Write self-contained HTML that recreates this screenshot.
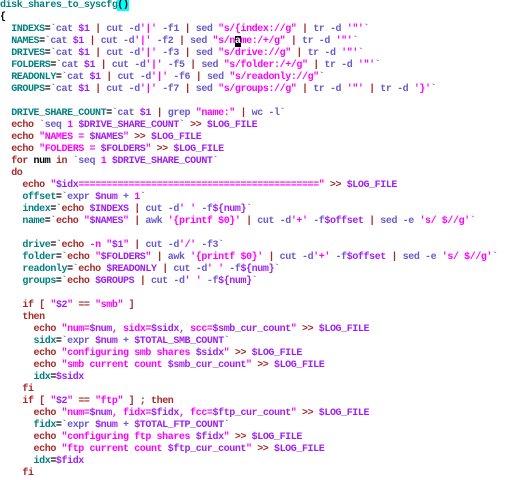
<!DOCTYPE html>
<html><head><meta charset="utf-8"><style>
html,body{margin:0;padding:0;background:#fff;width:515px;height:480px;overflow:hidden}
pre{margin:0;padding:0;font-family:"Liberation Mono","DejaVu Sans Mono",monospace;font-size:10px;letter-spacing:-0.41px;line-height:12px;color:#000;white-space:pre;font-weight:bold}
.t{color:#008080}
.s{color:#6a5acd}
.m{color:#ff00ff}
.p{color:#a020f0}
.r{color:#a52a2a;font-weight:bold}
.c{background:#00ffff}
.cur{background:#000;color:#fff}
</style></head><body><pre><span class="t">disk_shares_to_syscfg</span><span class="c">()</span>
{
  <span class="t">INDEXS</span>=<span class="s">`cat </span><span class="p">$1</span> <span class="r">|</span> <span class="s">cut -d</span><span class="m">'|'</span> <span class="s">-f1</span> <span class="r">|</span> <span class="s">sed </span><span class="m">"s/{index://g"</span> <span class="r">|</span> <span class="s">tr -d </span><span class="m">'"'</span><span class="s">`</span>
  <span class="t">NAMES</span>=<span class="s">`cat </span><span class="p">$1</span> <span class="r">|</span> <span class="s">cut -d</span><span class="m">'|'</span> <span class="s">-f2</span> <span class="r">|</span> <span class="s">sed </span><span class="m">"s/n</span><span class="cur">a</span><span class="m">me:/+/g"</span> <span class="r">|</span> <span class="s">tr -d </span><span class="m">'"'</span><span class="s">`</span>
  <span class="t">DRIVES</span>=<span class="s">`cat </span><span class="p">$1</span> <span class="r">|</span> <span class="s">cut -d</span><span class="m">'|'</span> <span class="s">-f3</span> <span class="r">|</span> <span class="s">sed </span><span class="m">"s/drive://g"</span> <span class="r">|</span> <span class="s">tr -d </span><span class="m">'"'</span><span class="s">`</span>
  <span class="t">FOLDERS</span>=<span class="s">`cat </span><span class="p">$1</span> <span class="r">|</span> <span class="s">cut -d</span><span class="m">'|'</span> <span class="s">-f5</span> <span class="r">|</span> <span class="s">sed </span><span class="m">"s/folder:/+/g"</span> <span class="r">|</span> <span class="s">tr -d </span><span class="m">'"'</span><span class="s">`</span>
  <span class="t">READONLY</span>=<span class="s">`cat </span><span class="p">$1</span> <span class="r">|</span> <span class="s">cut -d</span><span class="m">'|'</span> <span class="s">-f6</span> <span class="r">|</span> <span class="s">sed </span><span class="m">"s/readonly://g"</span><span class="s">`</span>
  <span class="t">GROUPS</span>=<span class="s">`cat </span><span class="p">$1</span> <span class="r">|</span> <span class="s">cut -d</span><span class="m">'|'</span> <span class="s">-f7</span> <span class="r">|</span> <span class="s">sed </span><span class="m">"s/groups://g"</span> <span class="r">|</span> <span class="s">tr -d </span><span class="m">'"'</span> <span class="r">|</span> <span class="s">tr -d </span><span class="m">'}'</span><span class="s">`</span>

  <span class="t">DRIVE_SHARE_COUNT</span>=<span class="s">`cat </span><span class="p">$1</span> <span class="r">|</span> <span class="s">grep </span><span class="m">"name:"</span> <span class="r">|</span> <span class="s">wc -l`</span>
  <span class="r">echo</span> <span class="s">`seq </span><span class="m">1</span> <span class="p">$DRIVE_SHARE_COUNT</span><span class="s">`</span> <span class="r">&gt;&gt;</span> <span class="p">$LOG_FILE</span>
  <span class="r">echo</span> <span class="m">"NAMES = </span><span class="p">$NAMES</span><span class="m">"</span> <span class="r">&gt;&gt;</span> <span class="p">$LOG_FILE</span>
  <span class="r">echo</span> <span class="m">"FOLDERS = </span><span class="p">$FOLDERS</span><span class="m">"</span> <span class="r">&gt;&gt;</span> <span class="p">$LOG_FILE</span>
  <span class="r">for</span> num <span class="r">in</span> <span class="s">`seq </span><span class="m">1</span> <span class="p">$DRIVE_SHARE_COUNT</span><span class="s">`</span>
  <span class="r">do</span>
    <span class="r">echo</span> <span class="m">"</span><span class="p">$idx</span><span class="m">===========================================</span><span class="m">"</span> <span class="r">&gt;&gt;</span> <span class="p">$LOG_FILE</span>
    <span class="t">offset</span>=<span class="s">`expr </span><span class="p">$num</span> <span class="s">+</span> <span class="m">1</span><span class="s">`</span>
    <span class="t">index</span>=<span class="s">`</span><span class="r">echo</span> <span class="p">$INDEXS</span> <span class="r">|</span> <span class="s">cut -d</span><span class="m">' '</span> <span class="s">-f</span><span class="p">${num}</span><span class="s">`</span>
    <span class="t">name</span>=<span class="s">`</span><span class="r">echo</span> <span class="m">"</span><span class="p">$NAMES</span><span class="m">"</span> <span class="r">|</span> <span class="s">awk </span><span class="m">'{printf $0}'</span> <span class="r">|</span> <span class="s">cut -d</span><span class="m">'+'</span> <span class="s">-f</span><span class="p">$offset</span> <span class="r">|</span> <span class="s">sed -e </span><span class="m">'s/ $//g'</span><span class="s">`</span>

    <span class="t">drive</span>=<span class="s">`</span><span class="r">echo</span> <span class="m">-n</span> <span class="m">"</span><span class="p">$1</span><span class="m">"</span> <span class="r">|</span> <span class="s">cut -d</span><span class="m">'/'</span> <span class="s">-f3`</span>
    <span class="t">folder</span>=<span class="s">`</span><span class="r">echo</span> <span class="m">"</span><span class="p">$FOLDERS</span><span class="m">"</span> <span class="r">|</span> <span class="s">awk </span><span class="m">'{printf $0}'</span> <span class="r">|</span> <span class="s">cut -d</span><span class="m">'+'</span> <span class="s">-f</span><span class="p">$offset</span> <span class="r">|</span> <span class="s">sed -e </span><span class="m">'s/ $//g'</span><span class="s">`</span>
    <span class="t">readonly</span>=<span class="s">`</span><span class="r">echo</span> <span class="p">$READONLY</span> <span class="r">|</span> <span class="s">cut -d</span><span class="m">' '</span> <span class="s">-f</span><span class="p">${num}</span><span class="s">`</span>
    <span class="t">groups</span>=<span class="s">`</span><span class="r">echo</span> <span class="p">$GROUPS</span> <span class="r">|</span> <span class="s">cut -d</span><span class="m">' '</span> <span class="s">-f</span><span class="p">${num}</span><span class="s">`</span>

    <span class="r">if</span> <span class="r">[</span> <span class="m">"</span><span class="p">$2</span><span class="m">"</span> <span class="r">==</span> <span class="m">"smb"</span> <span class="r">]</span>
    <span class="r">then</span>
      <span class="r">echo</span> <span class="m">"num=</span><span class="p">$num</span><span class="m">, sidx=</span><span class="p">$sidx</span><span class="m">, scc=</span><span class="p">$smb_cur_count</span><span class="m">"</span> <span class="r">&gt;&gt;</span> <span class="p">$LOG_FILE</span>
      <span class="t">sidx</span>=<span class="s">`expr </span><span class="p">$num</span> <span class="s">+</span> <span class="p">$TOTAL_SMB_COUNT</span><span class="s">`</span>
      <span class="r">echo</span> <span class="m">"configuring smb shares </span><span class="p">$sidx</span><span class="m">"</span> <span class="r">&gt;&gt;</span> <span class="p">$LOG_FILE</span>
      <span class="r">echo</span> <span class="m">"smb current count </span><span class="p">$smb_cur_count</span><span class="m">"</span> <span class="r">&gt;&gt;</span> <span class="p">$LOG_FILE</span>
      <span class="t">idx</span>=<span class="p">$sidx</span>
    <span class="r">fi</span>
    <span class="r">if</span> <span class="r">[</span> <span class="m">"</span><span class="p">$2</span><span class="m">"</span> <span class="r">==</span> <span class="m">"ftp"</span> <span class="r">]</span> <span class="r">;</span> <span class="r">then</span>
      <span class="r">echo</span> <span class="m">"num=</span><span class="p">$num</span><span class="m">, fidx=</span><span class="p">$fidx</span><span class="m">, fcc=</span><span class="p">$ftp_cur_count</span><span class="m">"</span> <span class="r">&gt;&gt;</span> <span class="p">$LOG_FILE</span>
      <span class="t">fidx</span>=<span class="s">`expr </span><span class="p">$num</span> <span class="s">+</span> <span class="p">$TOTAL_FTP_COUNT</span><span class="s">`</span>
      <span class="r">echo</span> <span class="m">"configuring ftp shares </span><span class="p">$fidx</span><span class="m">"</span> <span class="r">&gt;&gt;</span> <span class="p">$LOG_FILE</span>
      <span class="r">echo</span> <span class="m">"ftp current count </span><span class="p">$ftp_cur_count</span><span class="m">"</span> <span class="r">&gt;&gt;</span> <span class="p">$LOG_FILE</span>
      <span class="t">idx</span>=<span class="p">$fidx</span>
    <span class="r">fi</span>
</pre></body></html>
